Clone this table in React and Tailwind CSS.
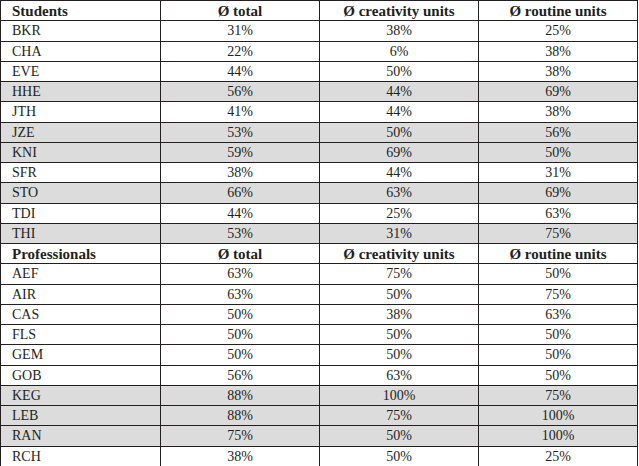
import React from 'react';

const students = [
  ['BKR', '31%', '38%', '25%', false],
  ['CHA', '22%', '6%', '38%', false],
  ['EVE', '44%', '50%', '38%', false],
  ['HHE', '56%', '44%', '69%', true],
  ['JTH', '41%', '44%', '38%', false],
  ['JZE', '53%', '50%', '56%', true],
  ['KNI', '59%', '69%', '50%', true],
  ['SFR', '38%', '44%', '31%', false],
  ['STO', '66%', '63%', '69%', true],
  ['TDI', '44%', '25%', '63%', false],
  ['THI', '53%', '31%', '75%', true],
];

const professionals = [
  ['AEF', '63%', '75%', '50%', false],
  ['AIR', '63%', '50%', '75%', false],
  ['CAS', '50%', '38%', '63%', false],
  ['FLS', '50%', '50%', '50%', false],
  ['GEM', '50%', '50%', '50%', false],
  ['GOB', '56%', '63%', '50%', false],
  ['KEG', '88%', '100%', '75%', true],
  ['LEB', '88%', '75%', '100%', true],
  ['RAN', '75%', '50%', '100%', true],
  ['RCH', '38%', '50%', '25%', false],
];

const HeaderRow = ({ label }) => (
  <>
    <div className="bg-white flex items-center pl-[11px] pt-px font-bold text-[15px]">{label}</div>
    <div className="bg-white flex items-center justify-center pt-px font-bold text-[15px]">Ø total</div>
    <div className="bg-white flex items-center justify-center pt-px font-bold text-[15px]">Ø creativity units</div>
    <div className="bg-white flex items-center justify-center pt-px font-bold text-[15px]">Ø routine units</div>
  </>
);

const DataRow = ({ row }) => {
  const [name, total, creative, routine, shaded] = row;
  const bg = shaded ? 'bg-[#dcdcdd]' : 'bg-white';
  return (
    <>
      <div className={`${bg} flex items-center pl-[11px] pt-px`}>{name}</div>
      <div className={`${bg} flex items-center justify-center pt-px`}>{total}</div>
      <div className={`${bg} flex items-center justify-center pt-px`}>{creative}</div>
      <div className={`${bg} flex items-center justify-center pt-px`}>{routine}</div>
    </>
  );
};

export default function App() {
  return (
    <div className="bg-white w-[639px] h-[466px]">
      <div
        className="grid grid-cols-[159px_158px_158px_158px] auto-rows-[19.26px] gap-px bg-[#231f20] border border-[#231f20] w-[638px] text-[14px] leading-none text-[#231f20]"
        style={{ fontFamily: '"Liberation Serif", "Times New Roman", serif' }}
      >
        <HeaderRow label="Students" />
        {students.map((r) => (
          <DataRow key={r[0]} row={r} />
        ))}
        <HeaderRow label="Professionals" />
        {professionals.map((r) => (
          <DataRow key={r[0]} row={r} />
        ))}
      </div>
    </div>
  );
}
